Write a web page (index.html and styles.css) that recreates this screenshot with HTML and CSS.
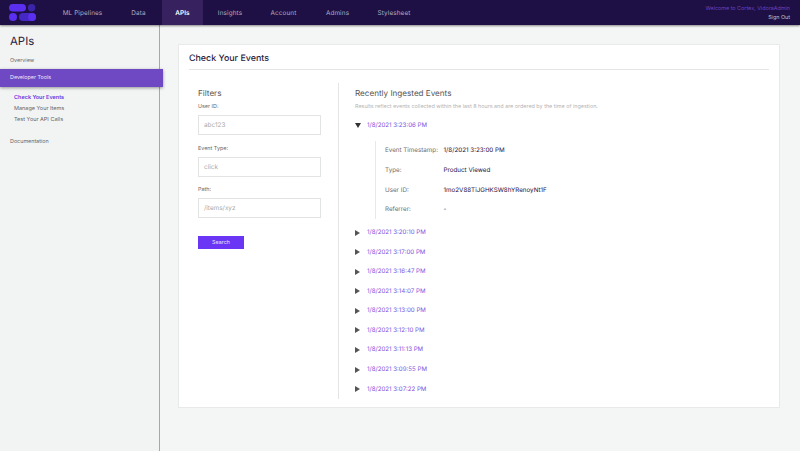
FILE: index.html
```html
<!DOCTYPE html>
<html lang="en">
<head>
  <meta charset="utf-8">
  <meta name="viewport" content="width=device-width, initial-scale=1.0">
  <title>Check Your Events</title>
  <link rel="stylesheet" href="styles.css">
</head>
<body>
  <header class="topbar">
    <svg class="logo" width="27" height="17" viewBox="0 0 27 17">
      <rect x="0" y="0" width="17" height="7.6" rx="3.8" fill="#5a2ff0"></rect>
      <circle cx="22.6" cy="3.8" r="3.7" fill="#3c24a8"></circle>
      <circle cx="4" cy="13" r="4" fill="#5a2ff0"></circle>
      <rect x="10" y="9" width="17" height="8" rx="4" fill="#4527c4"></rect>
      <circle cx="23" cy="13" r="4" fill="#5a2ff0"></circle>
    </svg>
    <nav class="nav">
      <a class="nav-item nav-pipelines">ML Pipelines</a>
      <a class="nav-item nav-data">Data</a>
      <a class="nav-item nav-apis active">APIs</a>
      <a class="nav-item nav-insights">Insights</a>
      <a class="nav-item nav-account">Account</a>
      <a class="nav-item nav-admins">Admins</a>
      <a class="nav-item nav-stylesheet">Stylesheet</a>
    </nav>
    <div class="user">
      <div class="welcome">Welcome to Cortex, VidoraAdmin</div>
      <div class="signout">Sign Out</div>
    </div>
  </header>

  <div class="layout">
    <aside class="sidebar">
      <h1 class="side-title">APIs</h1>
      <a class="side-link side-overview">Overview</a>
      <a class="side-link side-active">Developer Tools</a>
      <ul class="side-sub">
        <li class="current">Check Your Events</li>
        <li>Manage Your Items</li>
        <li>Test Your API Calls</li>
      </ul>
      <a class="side-link side-docs">Documentation</a>
    </aside>

    <main class="main">
      <section class="card">
        <h2 class="card-title">Check Your Events</h2>
        <div class="columns">
          <form class="filters">
            <h3 class="col-title">Filters</h3>
            <label class="field-label">User ID:</label>
            <div class="input">abc123</div>
            <label class="field-label">Event Type:</label>
            <div class="input">click</div>
            <label class="field-label">Path:</label>
            <div class="input">/items/xyz</div>
            <button class="search" type="button">Search</button>
          </form>

          <div class="events">
            <h3 class="col-title">Recently Ingested Events</h3>
            <p class="note">Results reflect events collected within the last 8 hours and are ordered by the time of ingestion.</p>

            <div class="event"><span class="arrow down"></span><a>1/8/2021 3:23:06 PM</a></div>
            <div class="detail">
              <div class="detail-row"><span>Event Timestamp:</span><b>1/8/2021 3:23:00 PM</b></div>
              <div class="detail-row"><span>Type:</span><b>Product Viewed</b></div>
              <div class="detail-row"><span>User ID:</span><b>1mo2V88TiJGHKSW8hYRenoyNt1F</b></div>
              <div class="detail-row"><span>Referrer:</span><b>-</b></div>
            </div>
            <div class="event"><span class="arrow"></span><a>1/8/2021 3:20:10 PM</a></div>
            <div class="event"><span class="arrow"></span><a>1/8/2021 3:17:00 PM</a></div>
            <div class="event"><span class="arrow"></span><a>1/8/2021 3:16:47 PM</a></div>
            <div class="event"><span class="arrow"></span><a>1/8/2021 3:14:07 PM</a></div>
            <div class="event"><span class="arrow"></span><a>1/8/2021 3:13:00 PM</a></div>
            <div class="event"><span class="arrow"></span><a>1/8/2021 3:12:10 PM</a></div>
            <div class="event"><span class="arrow"></span><a>1/8/2021 3:11:13 PM</a></div>
            <div class="event"><span class="arrow"></span><a>1/8/2021 3:09:55 PM</a></div>
            <div class="event"><span class="arrow"></span><a>1/8/2021 3:07:22 PM</a></div>
          </div>
        </div>
      </section>
    </main>
  </div>
</body>
</html>
```

FILE: styles.css
```css
:root {
  --navy: #1e1044;
  --purple: #6f48c4;
  --link: #7a55e0;
  --border: #e4e6e6;
  --page: #f4f6f6;
}

* {
  margin: 0;
  padding: 0;
  box-sizing: border-box;
}

html, body {
  height: 100%;
  overflow: hidden;
}

body {
  font-family: "Inter", "Liberation Sans", sans-serif;
  background-color: var(--page);
  color: #444;
  font-size: 6px;
  text-rendering: geometricPrecision;
}

.topbar {
  position: relative;
  z-index: 3;
  display: flex;
  align-items: stretch;
  height: 25px;
  padding-left: 9px;
  background-color: var(--navy);
  box-shadow: 0 1px 2px rgba(0, 0, 0, 0.45);
}

.logo {
  align-self: flex-start;
  margin-top: 4px;
}

.nav {
  display: flex;
  margin-left: 6px;
}

.nav-item {
  display: flex;
  align-items: center;
  justify-content: center;
  color: #b0aabd;
  font-size: 6.4px;
  letter-spacing: 0.1px;
}

.nav-pipelines { width: 81px; }
.nav-data { width: 31px; margin-right: 8px; }
.nav-apis { width: 41px; }
.nav-insights { width: 54px; }
.nav-account { width: 53px; }
.nav-admins { width: 55px; }
.nav-stylesheet { width: 58px; }

.nav-item.active {
  background-color: #38215f;
  color: #fff;
  font-weight: 600;
}

.user {
  margin-left: auto;
  padding: 5px 10px 0 0;
  text-align: right;
  font-size: 5.4px;
  line-height: 9px;
}

.welcome {
  color: #6a42c0;
}

.signout {
  color: #c4c0cc;
}

.layout {
  display: flex;
  height: 426px;
}

.sidebar {
  position: relative;
  width: 160px;
  padding-top: 9px;
  background-color: #f2f4f4;
  border-right: 1px solid #a89ce0;
}

.side-title {
  padding-left: 10px;
  font-size: 11.4px;
  line-height: 14px;
  font-weight: 400;
  color: #2a2140;
}

.side-link {
  display: block;
  padding-left: 10px;
  font-size: 5.4px;
  color: #666;
}

.side-overview {
  margin-top: 9px;
  line-height: 8px;
}

.side-active {
  position: relative;
  width: 163px;
  height: 18px;
  margin-top: 4px;
  line-height: 19px;
  background-color: var(--purple);
  color: #f0eafa;
  box-shadow: 0 1px 3px rgba(0, 0, 0, 0.4);
}

.side-sub {
  list-style: none;
  margin-top: 6px;
  padding-left: 14px;
  font-size: 5.5px;
  line-height: 10.8px;
  color: #666;
}

.side-sub .current {
  color: #6a35e0;
  font-weight: 600;
}

.side-docs {
  margin-top: 13px;
  line-height: 8px;
}

.main {
  flex: 1;
  padding: 19px 20px 0 18px;
}

.card {
  height: 364px;
  padding: 9px 10px 0;
  background-color: #fff;
  border: 1px solid #e8eaea;
}

.card-title {
  height: 16px;
  font-size: 8.9px;
  line-height: 10px;
  font-weight: 500;
  color: #2a2140;
  border-bottom: 1px solid var(--border);
}

.columns {
  display: flex;
  margin-top: 13px;
}

.filters {
  width: 150px;
  height: 316px;
  padding: 5px 17px 0 9px;
  border-right: 1px solid var(--border);
}

.col-title {
  font-size: 8.1px;
  line-height: 10px;
  font-weight: 400;
  color: #555;
}

.field-label {
  display: block;
  margin-top: 9.5px;
  font-size: 5.4px;
  line-height: 8px;
  color: #666;
}

.filters .col-title + .field-label {
  margin-top: 5px;
}

.input {
  height: 20px;
  margin-top: 4px;
  padding-left: 5px;
  border: 1px solid #e2e4e4;
  font-size: 6.4px;
  line-height: 18px;
  color: #aaa;
}

.search {
  display: block;
  width: 46px;
  height: 13px;
  margin-top: 17.5px;
  border: none;
  background-color: #6a35f5;
  color: #e8e0ff;
  font-family: inherit;
  font-size: 5.4px;
}

.events {
  flex: 1;
  padding: 5px 0 0 16px;
}

.note {
  margin-top: 5px;
  font-size: 5.42px;
  line-height: 8px;
  color: #b4b4b4;
}

.note + .event {
  margin-top: 5px;
}

.event {
  display: flex;
  align-items: center;
  height: 19.55px;
  font-size: 6.15px;
  color: var(--link);
}

.arrow {
  width: 0;
  height: 0;
  margin-right: 7px;
  border-style: solid;
  border-width: 3px 0 3px 5px;
  border-color: transparent transparent transparent #555;
}

.arrow.down {
  margin-right: 6px;
  border-width: 5px 3px 0 3px;
  border-color: #333 transparent transparent transparent;
}

.detail {
  margin: 5px 0 4px 20px;
  padding-left: 9px;
  border-left: 1px solid #e8e8e8;
}

.detail-row {
  display: flex;
  align-items: center;
  height: 19.6px;
  font-size: 6.25px;
}

.detail-row span {
  width: 58.5px;
  color: #707070;
}

.detail-row b {
  font-weight: 400;
  color: #1e1044;
}
```
